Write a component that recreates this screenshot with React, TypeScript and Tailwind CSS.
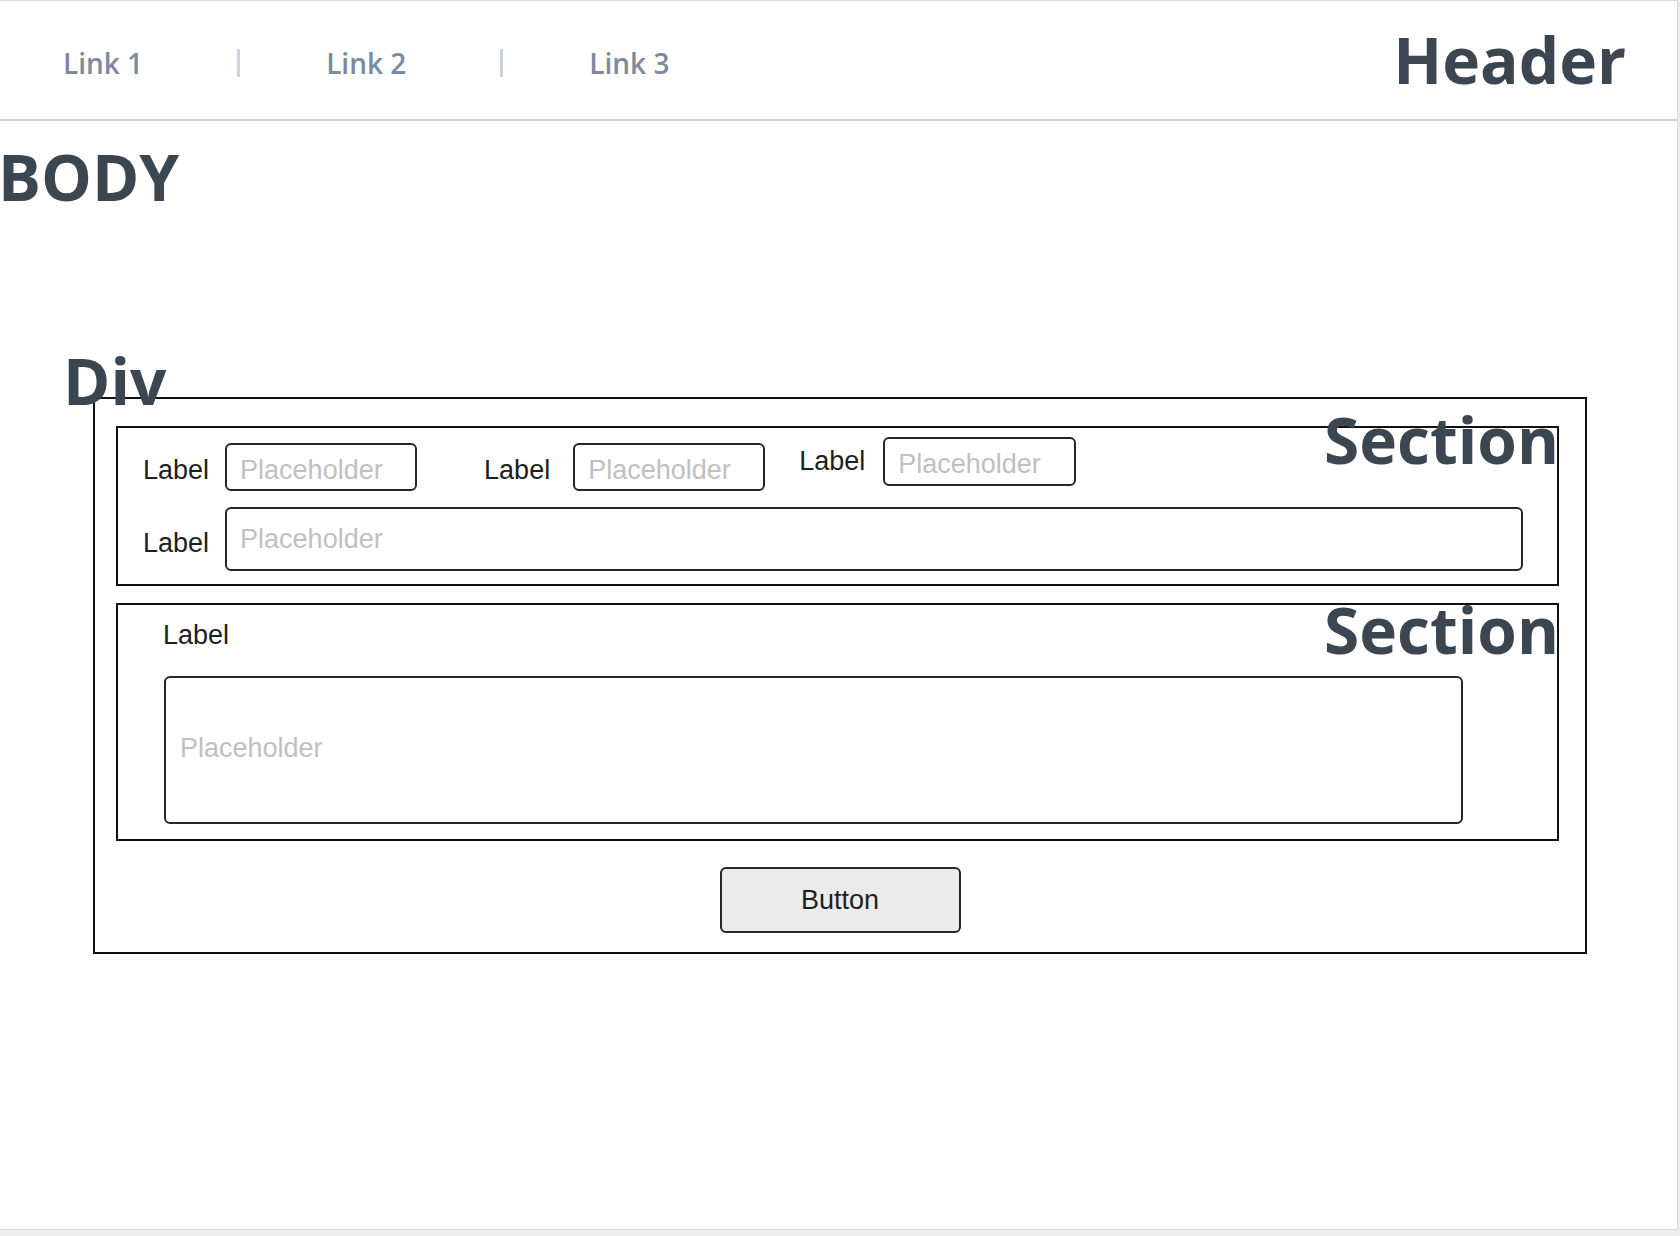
const heading = "font-['Open_Sans',sans-serif] text-[64px] font-bold leading-none text-[#3c4651]";
const label = "font-['Liberation_Sans',Arial,sans-serif] text-[27px] leading-none text-[#1e1e1e]";
const field =
  "box-border rounded-md border-2 border-[#262626] bg-white pl-[13px] font-['Liberation_Sans',Arial,sans-serif] text-[27px] text-[#1e1e1e] outline-none placeholder:text-[#c0c0c0]";

function NavLink({ children }: { children: React.ReactNode }) {
  return (
    <a href="#" className="font-['Open_Sans',sans-serif] text-[28px] font-semibold leading-none text-[#7b8aa1]">
      {children}
    </a>
  );
}

function Divider() {
  return <span className="ml-[94px] mr-[86px] h-[28px] w-[3px] bg-[#cbd3dc]" />;
}

export default function App() {
  return (
    <div className="min-h-screen bg-[#ececec]">
      <div className="box-border h-[1230px] w-[1678px] border-t border-r border-b border-[#d9d9d9] bg-white">
        <header className="box-border flex h-[120px] items-center justify-between border-b-2 border-[#c9d3dd] pl-[63px] pr-[51px]">
          <nav className="mt-[6px] flex items-center">
            <NavLink>Link 1</NavLink>
            <Divider />
            <NavLink>Link 2</NavLink>
            <Divider />
            <NavLink>Link 3</NavLink>
          </nav>
          <h1 className={heading}>Header</h1>
        </header>

        <h2 className={`${heading} -ml-[2px] mt-[24px]`}>BODY</h2>

        {/* div wrapper */}
        <div className="relative ml-[93px] mt-[188px] box-border w-[1494px] border-2 border-[#111] pt-[27px] pb-[19px]">
          <span className={`${heading} absolute left-[-32px] top-[-50px] z-10`}>Div</span>

          {/* section 1: inline fields */}
          <section className="relative ml-[21px] box-border w-[1443px] border-2 border-[#111] pb-[13px]">
            <span className={`${heading} absolute right-[-2px] top-[-20px] z-10`}>Section</span>

            <div className="flex items-start">
              <div className="ml-[25px] mt-[15px] flex items-center">
                <label className={`${label} mt-[7px]`}>Label</label>
                <input className={`${field} ml-[16px] h-[48px] w-[192px] pt-[7px]`} placeholder="Placeholder" />
              </div>
              <div className="ml-[67px] mt-[15px] flex items-center">
                <label className={`${label} mt-[7px]`}>Label</label>
                <input className={`${field} ml-[23px] h-[48px] w-[192px] pt-[7px]`} placeholder="Placeholder" />
              </div>
              <div className="ml-[34px] mt-[9px] flex items-center">
                <label className={label}>Label</label>
                <input className={`${field} ml-[18px] h-[49px] w-[193px] pt-[6px]`} placeholder="Placeholder" />
              </div>
            </div>

            <div className="ml-[25px] mt-[16px] flex items-center">
              <label className={`${label} mt-[8px]`}>Label</label>
              <input className={`${field} ml-[16px] h-[64px] w-[1298px]`} placeholder="Placeholder" />
            </div>
          </section>

          {/* section 2: textarea */}
          <section className="relative ml-[21px] mt-[17px] box-border w-[1443px] border-2 border-[#111] pb-[15px]">
            <span className={`${heading} absolute right-[-2px] top-[-7px] z-10`}>Section</span>
            <label className={`${label} ml-[45px] mt-[17px] block`}>Label</label>
            <textarea
              className={`${field} ml-[46px] mt-[27px] block h-[148px] w-[1299px] resize-none pl-[14px] pt-[50px]`}
              placeholder="Placeholder"
            />
          </section>

          <button
            type="button"
            className="mx-auto mt-[26px] box-border block h-[66px] w-[241px] rounded-md border-2 border-[#262626] bg-[#ebebeb] font-['Liberation_Sans',Arial,sans-serif] text-[27px] text-[#1e1e1e]"
          >
            Button
          </button>
        </div>
      </div>
    </div>
  );
}
